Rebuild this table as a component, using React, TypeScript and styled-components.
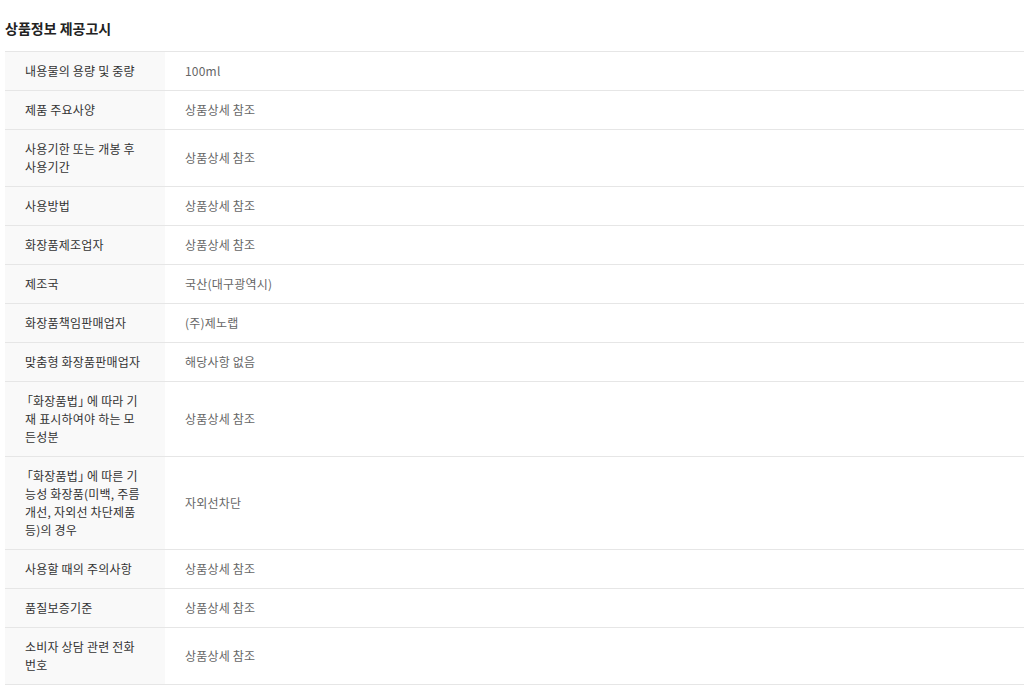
import styled, { createGlobalStyle } from "styled-components";

const GlobalStyle = createGlobalStyle`
  html, body {
    margin: 0;
    padding: 0;
    background: #fff;
  }
  body {
    font-family: "Noto Sans CJK KR", "Noto Sans", sans-serif;
  }
`;

const Wrapper = styled.section`
  padding: 18px 4px 0 5px;
`;

const Title = styled.h2`
  margin: 0 0 13px;
  font-size: 14px;
  font-weight: 700;
  line-height: 20px;
  color: #222;
`;

const Table = styled.table`
  width: 100%;
  border-collapse: collapse;
  border-top: 1px solid #e6e6e6;
  table-layout: fixed;
  font-size: 12px;
  line-height: 18px;
  letter-spacing: 0.2px;
`;

const Row = styled.tr`
  border-bottom: 1px solid #e6e6e6;
`;

const Label = styled.th`
  width: 160px;
  box-sizing: border-box;
  padding: 10px 20px;
  background: #f9f9f9;
  color: #333;
  font-weight: 400;
  text-align: left;
  vertical-align: middle;
`;

const Value = styled.td`
  padding: 10px 20px;
  color: #666;
  vertical-align: middle;
`;

// 낫표는 반각으로
const Bracket = styled.span<{ $open?: boolean }>`
  display: inline-block;
  font-feature-settings: "halt";
  letter-spacing: 0;
  padding: ${(p) => (p.$open ? "0 0 0 2px" : "0 3px 0 0")};
`;

const rows: [string, string][] = [
  ["내용물의 용량 및 중량", "100ml"],
  ["제품 주요사양", "상품상세 참조"],
  ["사용기한 또는 개봉 후 사용기간", "상품상세 참조"],
  ["사용방법", "상품상세 참조"],
  ["화장품제조업자", "상품상세 참조"],
  ["제조국", "국산(대구광역시)"],
  ["화장품책임판매업자", "(주)제노랩"],
  ["맞춤형 화장품판매업자", "해당사항 없음"],
  ["「화장품법」에 따라 기재 표시하여야 하는 모든성분", "상품상세 참조"],
  ["「화장품법」에 따른 기능성 화장품(미백, 주름개선, 자외선 차단제품 등)의 경우", "자외선차단"],
  ["사용할 때의 주의사항", "상품상세 참조"],
  ["품질보증기준", "상품상세 참조"],
  ["소비자 상담 관련 전화번호", "상품상세 참조"],
];

const renderLabel = (text: string) =>
  text.split(/([「」])/).map((part, i) =>
    part === "「" || part === "」" ? (
      <Bracket key={i} $open={part === "「"}>
        {part}
      </Bracket>
    ) : (
      part
    )
  );

export default function App() {
  return (
    <>
      <GlobalStyle />
      <Wrapper>
        <Title>상품정보 제공고시</Title>
        <Table>
          <tbody>
            {rows.map(([label, value]) => (
              <Row key={label}>
                <Label scope="row">{renderLabel(label)}</Label>
                <Value>{value}</Value>
              </Row>
            ))}
          </tbody>
        </Table>
      </Wrapper>
    </>
  );
}
